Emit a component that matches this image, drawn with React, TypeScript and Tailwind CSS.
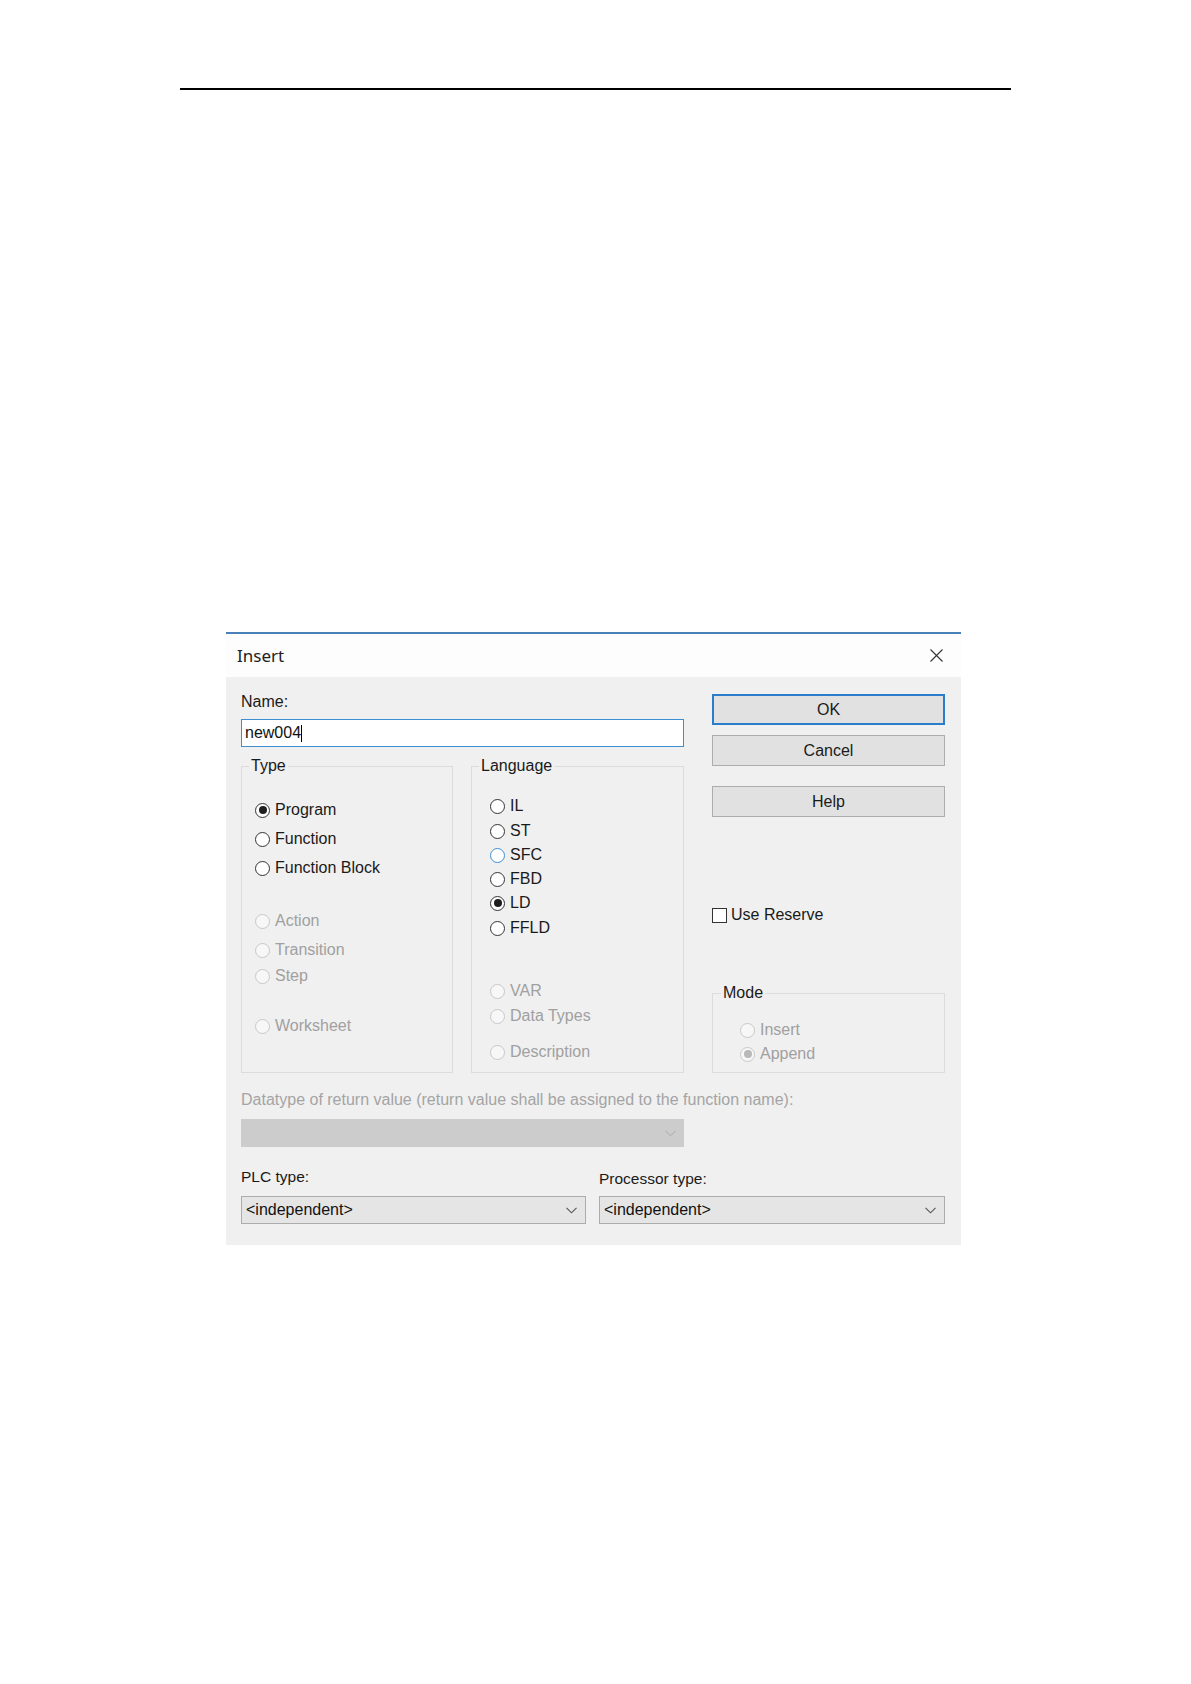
import React from 'react';

type RadioProps = {
  label: string;
  checked?: boolean;
  disabled?: boolean;
  focus?: boolean;
  className?: string;
};

function Radio({ label, checked, disabled, focus, className = '' }: RadioProps) {
  const ring = disabled
    ? 'border-[#c8c8c8] bg-[#f7f7f7]'
    : focus
      ? 'border-[#3d8fd1] bg-white'
      : 'border-[#333333] bg-white';
  return (
    <div className={`flex items-center h-[20px] gap-[5px] ${className}`}>
      <span className={`w-[15px] h-[15px] rounded-full border flex items-center justify-center shrink-0 ${ring}`}>
        {checked && (
          <span className={`w-[8px] h-[8px] rounded-full ${disabled ? 'bg-[#b9b9b9]' : 'bg-[#1e1e1e]'}`} />
        )}
      </span>
      <span className={`text-[16px] leading-[18px] whitespace-nowrap ${disabled ? 'text-[#a0a0a0]' : 'text-[#1a1a1a]'}`}>
        {label}
      </span>
    </div>
  );
}

function Chevron({ light }: { light?: boolean }) {
  return (
    <svg width="11" height="7" viewBox="0 0 11 7" className="shrink-0">
      <polyline
        points="0.5,0.8 5.5,5.8 10.5,0.8"
        fill="none"
        stroke={light ? '#b4b4b4' : '#555555'}
        strokeWidth="1.1"
      />
    </svg>
  );
}

function Button({ label, primary }: { label: string; primary?: boolean }) {
  return (
    <div
      className={`h-[31px] w-[233px] flex items-center justify-center bg-[#e1e1e1] text-[16px] text-[#1a1a1a] ${
        primary ? 'border-2 border-[#2b7ccb]' : 'border border-[#adadad]'
      }`}
    >
      {label}
    </div>
  );
}

export default function App() {
  return (
    <div className="min-h-[1684px] bg-white pt-[88px] font-['Liberation_Sans',Arial,sans-serif]">
      {/* page header rule */}
      <div className="ml-[180px] w-[831px] h-[2px] bg-black" />

      {/* dialog */}
      <div className="ml-[226px] mt-[542px] w-[735px]">
        <div className="h-[2px] bg-[#4a80b8]" />

        {/* title bar */}
        <div className="h-[43px] bg-[#fdfdfd] flex items-center justify-between pl-[11px] pr-[18px]">
          <span className="font-['Noto_Sans',sans-serif] text-[17px] text-[#222]">Insert</span>
          <svg width="13" height="13" viewBox="0 0 13 13">
            <line x1="0.5" y1="0.5" x2="12.5" y2="12.5" stroke="#333" strokeWidth="1.1" />
            <line x1="12.5" y1="0.5" x2="0.5" y2="12.5" stroke="#333" strokeWidth="1.1" />
          </svg>
        </div>

        {/* body */}
        <div className="bg-[#f0f0f0] h-[568px] pl-[15px] pr-[16px]">
          <div className="flex">
            {/* left column */}
            <div className="w-[443px] pt-[16px]">
              <div className="text-[16px] leading-[18px] text-[#1a1a1a]">Name:</div>
              <div className="mt-[8px] h-[28px] border border-[#3d8fd1] bg-white flex items-center pl-[3px] text-[16px] text-[#111]">
                new004<span className="w-px h-[17px] bg-black" />
              </div>

              <div className="mt-[10px] flex gap-[18px]">
                <fieldset className="w-[212px] h-[316px] border border-[#dcdcdc]">
                  <legend className="ml-[7px] px-[2px] text-[16px] leading-[18px] text-[#1a1a1a]">Type</legend>
                  <div className="pl-[13px]">
                    <Radio label="Program" checked className="mt-[25px]" />
                    <Radio label="Function" className="mt-[9px]" />
                    <Radio label="Function Block" className="mt-[9px]" />
                    <Radio label="Action" disabled className="mt-[33px]" />
                    <Radio label="Transition" disabled className="mt-[9px]" />
                    <Radio label="Step" disabled className="mt-[6px]" />
                    <Radio label="Worksheet" disabled className="mt-[30px]" />
                  </div>
                </fieldset>

                <fieldset className="w-[213px] h-[316px] border border-[#dcdcdc]">
                  <legend className="ml-[7px] px-[2px] text-[16px] leading-[18px] text-[#1a1a1a]">Language</legend>
                  <div className="pl-[18px]">
                    <Radio label="IL" className="mt-[21px]" />
                    <Radio label="ST" className="mt-[5px]" />
                    <Radio label="SFC" focus className="mt-[4px]" />
                    <Radio label="FBD" className="mt-[4px]" />
                    <Radio label="LD" checked className="mt-[4px]" />
                    <Radio label="FFLD" className="mt-[5px]" />
                    <Radio label="VAR" disabled className="mt-[43px]" />
                    <Radio label="Data Types" disabled className="mt-[5px]" />
                    <Radio label="Description" disabled className="mt-[16px]" />
                  </div>
                </fieldset>
              </div>
            </div>

            {/* right column */}
            <div className="ml-[28px] w-[233px] pt-[17px] flex flex-col">
              <Button label="OK" primary />
              <div className="mt-[10px]">
                <Button label="Cancel" />
              </div>
              <div className="mt-[20px]">
                <Button label="Help" />
              </div>

              <div className="mt-[88px] h-[20px] flex items-center gap-[4px]">
                <span className="w-[15px] h-[15px] border border-[#333] bg-white shrink-0" />
                <span className="text-[16px] leading-[18px] text-[#1a1a1a]">Use Reserve</span>
              </div>

              <fieldset className="mt-[59px] h-[89px] border border-[#dcdcdc]">
                <legend className="ml-[8px] px-[2px] text-[16px] leading-[18px] text-[#1a1a1a]">Mode</legend>
                <div className="pl-[27px]">
                  <Radio label="Insert" disabled className="mt-[18px]" />
                  <Radio label="Append" disabled checked className="mt-[4px]" />
                </div>
              </fieldset>
            </div>
          </div>

          {/* lower section */}
          <div className="mt-[18px] text-[16px] leading-[18px] text-[#a4a4a4] whitespace-nowrap">
            Datatype of return value (return value shall be assigned to the function name):
          </div>
          <div className="mt-[10px] w-[443px] h-[28px] bg-[#cccccc] flex items-center justify-end pr-[8px]">
            <Chevron light />
          </div>

          <div className="mt-[21px] flex gap-[13px]">
            <div className="w-[345px]">
              <div className="text-[15.5px] leading-[18px] text-[#1a1a1a]">PLC type:</div>
              <div className="mt-[10px] h-[28px] border border-[#acacac] bg-[#e5e5e5] flex items-center justify-between pl-[4px] pr-[8px] text-[16px] text-[#111]">
                &lt;independent&gt;
                <Chevron />
              </div>
            </div>
            <div className="w-[346px]">
              <div className="text-[15.5px] leading-[18px] text-[#1a1a1a] mt-[2px] mb-[-2px]">Processor type:</div>
              <div className="mt-[10px] h-[28px] border border-[#acacac] bg-[#e5e5e5] flex items-center justify-between pl-[4px] pr-[8px] text-[16px] text-[#111]">
                &lt;independent&gt;
                <Chevron />
              </div>
            </div>
          </div>
        </div>
      </div>
    </div>
  );
}
